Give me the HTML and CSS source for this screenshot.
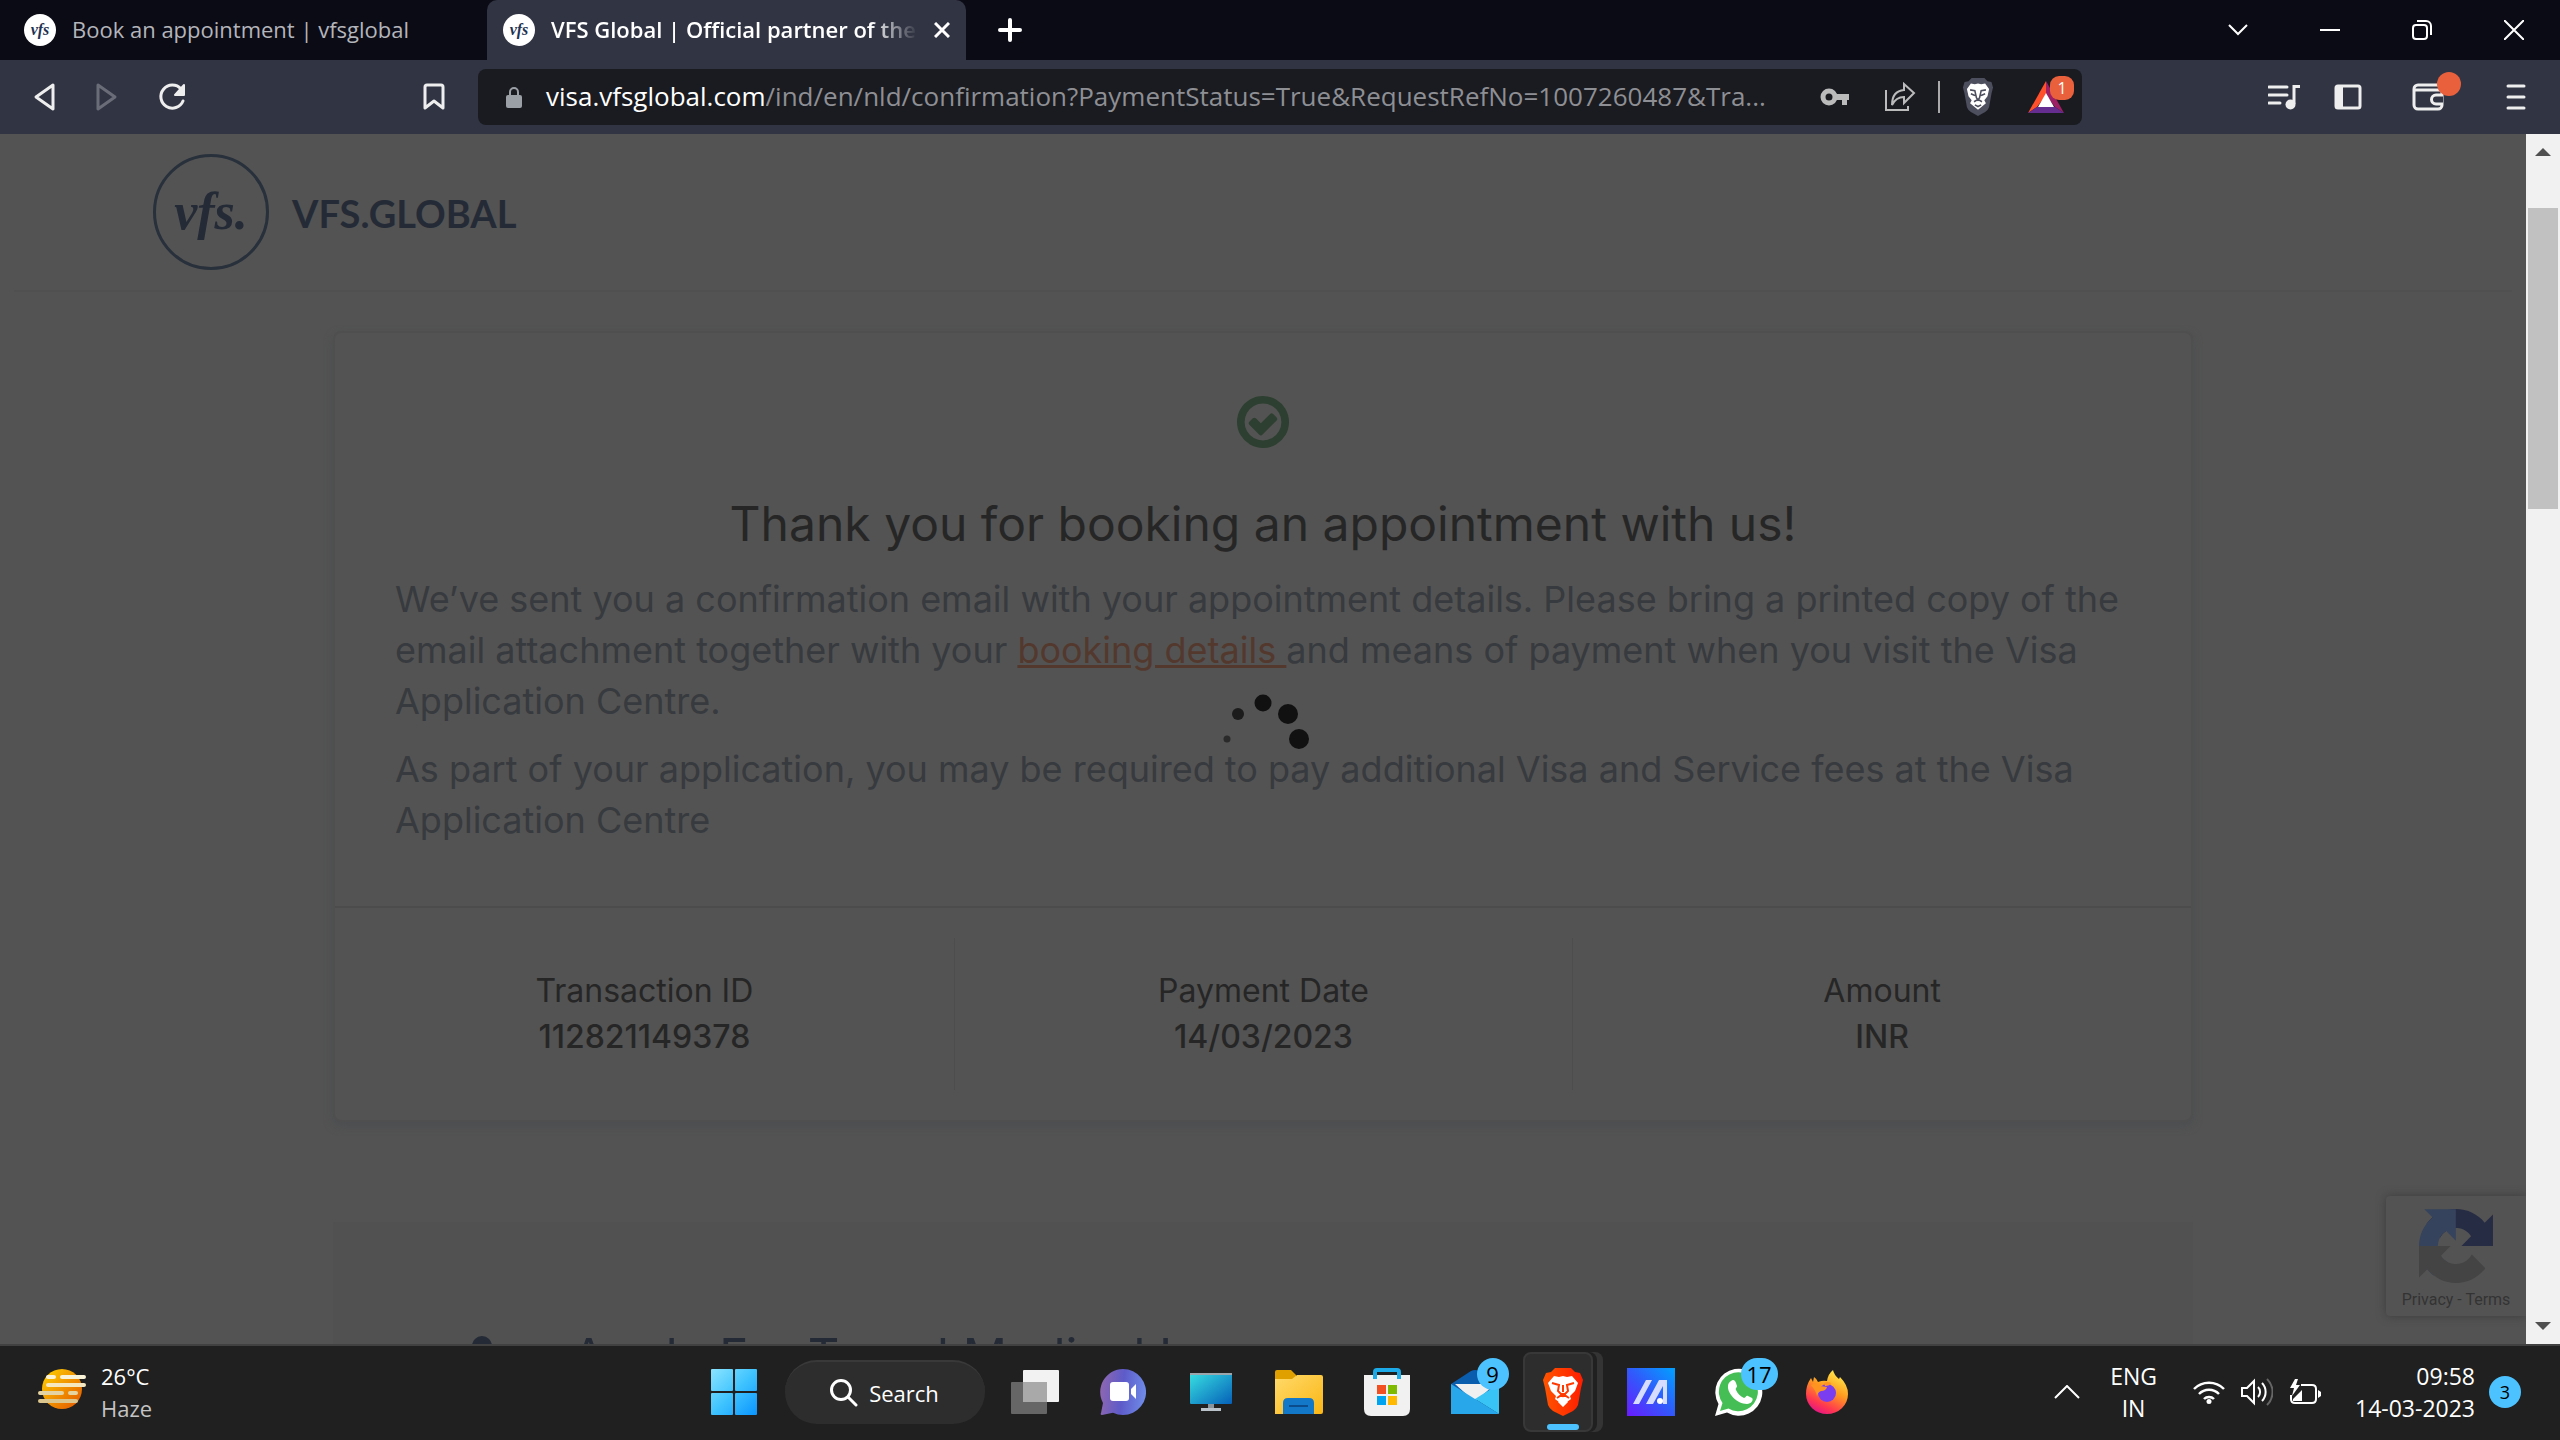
FILE: index.html
```html
<!DOCTYPE html>
<html lang="en">
<head>
<meta charset="utf-8">
<title>VFS Global | Official partner of the Netherlands</title>
<link rel="stylesheet" href="styles.css">
</head>
<body>
<div class="desktop">
  <header class="tabstrip">
    <button class="tab" type="button"><span class="favicon">vfs</span><span class="tab-title">Book an appointment | vfsglobal</span></button>
    <div class="tab tab-active"><span class="favicon">vfs</span><span class="tab-title">VFS Global | Official partner of the Netherlands</span>
      <button class="tab-close" type="button" aria-label="Close tab"><svg width="16" height="16" viewBox="0 0 16 16"><path d="M1 1l14 14M15 1L1 15" stroke="#fff" stroke-width="3"/></svg></button>
    </div>
    <button class="new-tab" type="button" aria-label="New tab"><svg width="24" height="24" viewBox="0 0 24 24"><path d="M12 2v20M2 12h20" stroke="#fff" stroke-width="4" stroke-linecap="round"/></svg></button>
    <div class="window-buttons">
      <button type="button" aria-label="Search tabs"><svg width="20" height="20" viewBox="0 0 20 20"><path d="M1 5l9 9 9-9" fill="none" stroke="#fff" stroke-width="2"/></svg></button>
      <button type="button" aria-label="Minimize"><svg width="20" height="20" viewBox="0 0 20 20"><path d="M0 10h20" stroke="#fff" stroke-width="2"/></svg></button>
      <button type="button" aria-label="Restore"><svg width="22" height="22" viewBox="0 0 22 22" fill="none" stroke="#fff" stroke-width="2"><rect x="2" y="6" width="14" height="14" rx="3"/><path d="M6 2h9a5 5 0 0 1 5 5v9"/></svg></button>
      <button type="button" aria-label="Close"><svg width="20" height="20" viewBox="0 0 20 20"><path d="M0 0l20 20M20 0L0 20" stroke="#fff" stroke-width="2"/></svg></button>
    </div>
  </header>

  <nav class="toolbar">
    <div class="nav-buttons">
      <button type="button" aria-label="Back"><svg width="24" height="30" viewBox="0 0 24 30"><path d="M21 3L4 15l17 12z" fill="none" stroke="#eee" stroke-width="3" stroke-linejoin="round"/></svg></button>
      <button type="button" aria-label="Forward"><svg width="24" height="30" viewBox="0 0 24 30"><path d="M3 3l17 12L3 27z" fill="none" stroke="#6a6d78" stroke-width="3" stroke-linejoin="round"/></svg></button>
      <button type="button" aria-label="Reload"><svg width="28" height="30" viewBox="1 0 28 30"><path d="M26 19a11.500 11.500 0 1 1-2-12" fill="none" stroke="#eee" stroke-width="3" stroke-linecap="round"/><path d="M27 3v10h-9z" fill="#eee" stroke="#eee" stroke-width="2" stroke-linejoin="round"/></svg></button>
      <button class="bookmark" type="button" aria-label="Bookmark"><svg width="22" height="28" viewBox="0 0 22 28"><path d="M2 4q0-2 2-2h14q2 0 2 2v21l-9-7-9 7z" fill="none" stroke="#eee" stroke-width="3" stroke-linejoin="round"/></svg></button>
    </div>
    <div class="address">
      <svg width="16" height="22" viewBox="0 0 16 22"><rect y="9" width="16" height="13" rx="2" fill="#9aa0a6"/><path d="M4 10V6a4 4 0 0 1 8 0v4" fill="none" stroke="#9aa0a6" stroke-width="2"/></svg>
      <label class="host" for="url">visa.vfsglobal.com</label>
      <input class="url" id="url" type="text" value="/ind/en/nld/confirmation?PaymentStatus=True&amp;RequestRefNo=1007260487&amp;Tra...">
      <div class="address-actions">
        <button type="button" aria-label="Saved password"><svg width="30" height="20" viewBox="0 0 30 20"><circle cx="9" cy="10" r="6" fill="none" stroke="#bbb" stroke-width="5"/><path d="M16 7h13v6h-2v5h-5v-5h-6z" fill="#bbb"/></svg></button>
        <button type="button" aria-label="Share"><svg width="32" height="30" viewBox="0 0 32 30" fill="none" stroke="#bbb" stroke-width="2"><path d="M2 8v20h22v-4"/><path d="M8 23Q8 9 20 8V2l10 9-10 10v-6Q12 15 8 23z"/></svg></button>
        <span class="divider"></span>
        <button type="button" aria-label="Brave Shields"><svg width="32" height="38" viewBox="0 0 40 48"><path d="M12 0h16l4 4 5 1 2 7-2 8-3 17q-1 3-5 6l-9 5-9-5q-4-3-5-6L3 20 1 12l2-7 5-1z" fill="#4d4e5e"/><path d="M20 7l4 1 5-1 5 7-2 9-4 5 2 4-10 8-10-8 2-4-4-5-2-9 5-7 5 1z" fill="#fff"/><path d="M10 15l6 1 2 9 2 3 2-3 2-9 6-1M15 30l5-3 5 3M16 34l4 2 4-2M11 20l5 2M29 20l-5 2" fill="none" stroke="#4d4e5e" stroke-width="2"/></svg></button>
        <button class="badged" type="button" aria-label="Brave Rewards"><svg width="36" height="32" viewBox="0 0 36 32"><path d="M18 0v14L9 26 0 32z" fill="#ff4f2b"/><path d="M18 0l18 32-9-6-9-12z" fill="#9e1f63"/><path d="M0 32l9-6h18l9 6z" fill="#662d91"/><path d="M18 12l8 14H10z" fill="#fff"/></svg><span class="reward-badge">1</span></button>
      </div>
    </div>
    <div class="tools">
      <button type="button" aria-label="Media"><svg width="34" height="28" viewBox="0 0 34 28"><path d="M1 4h18M1 12h18M1 20h11" stroke="#eee" stroke-width="3" stroke-linecap="round"/><path d="M26 21V3.500h6" fill="none" stroke="#eee" stroke-width="3"/><circle cx="22.500" cy="21.500" r="5" fill="#eee"/></svg></button>
      <button type="button" aria-label="Sidebar"><svg width="28" height="26" viewBox="0 0 28 26"><rect x="2" y="2" width="24" height="22" rx="2" fill="none" stroke="#eee" stroke-width="3"/><path d="M2 2h7v22H2z" fill="#eee"/></svg></button>
      <button class="badged" type="button" aria-label="Wallet"><svg width="34" height="28" viewBox="0 0 34 28" fill="none" stroke="#eee" stroke-width="3"><rect x="2" y="2" width="28" height="24" rx="4"/><path d="M3 7h26"/><path d="M31 12h-7a4.500 4.500 0 0 0 0 9h7" fill="#313443"/></svg><span class="wallet-dot"></span></button>
      <button type="button" aria-label="Menu"><svg width="20" height="28" viewBox="0 0 20 28"><path d="M2 3h16M2 14h16M2 25h16" stroke="#eee" stroke-width="3" stroke-linecap="round"/></svg></button>
    </div>
  </nav>

  <div class="browser-body">
    <div class="viewport">
      <header class="site-header">
        <a class="brand" href="#"><span class="brand-mark">vfs.</span><span class="brand-name">VFS.GLOBAL</span></a>
      </header>
      <main class="container">
        <section class="card">
          <div class="message">
            <svg class="check" width="52" height="52" viewBox="0 0 1536 1536"><path fill="#2d3f30" fill-rule="evenodd" d="M1171 723l-422 422q-19 19-45 19t-45-19L365 851q-19-19-19-45t19-45l102-102q19-19 45-19t45 19l147 147 275-275q19-19 45-19t45 19l102 102q19 19 19 45t-19 45zm141 45q0-148-73-273T1041 297 768 224t-273 73-198 198-73 273 73 273 198 198 273 73 273-73 198-198 73-273zm224 0q0 209-103 385.500T1153.500 1433 768 1536t-385.500-103T103 1153.500 0 768t103-385.500T382.500 103 768 0t385.500 103T1433 382.500 1536 768z"/></svg>
            <h1>Thank you for booking an appointment with us!</h1>
            <p>We’ve sent you a confirmation email with your appointment details. Please bring a printed copy of the email attachment together with your <a href="#">booking details </a>and means of payment when you visit the Visa Application Centre.</p>
            <p>As part of your application, you may be required to pay additional Visa and Service fees at the Visa Application Centre</p>
          </div>
          <dl class="facts">
            <div><dt>Transaction ID</dt><dd>112821149378</dd></div>
            <div><dt>Payment Date</dt><dd>14/03/2023</dd></div>
            <div><dt>Amount</dt><dd>INR</dd></div>
          </dl>
        </section>
        <section class="promo">
          <svg width="64" height="64" viewBox="0 0 64 64"><circle cx="32" cy="18" r="10" fill="#242b36"/><path d="M12 62q0-30 20-30t20 30z" fill="#242b36"/></svg>
          <h2>Apply For Travel Medical Insurance</h2>
          <button class="promo-button" type="button">Apply Now</button>
        </section>
      </main>
      <aside class="recaptcha">
        <svg width="74" height="74" viewBox="0 0 64 64"><path fill="#272c45" d="M64 31.955l-.033-1.370V4.687l-7.160 7.160C50.948 4.674 42.033.093 32.050.093c-10.400 0-19.622 4.960-25.458 12.640l11.736 11.860a15.550 15.550 0 0 1 4.754-5.334c2.050-1.600 4.952-2.906 8.968-2.906.485 0 .860.057 1.135.163 4.976.393 9.288 3.140 11.828 7.124l-8.307 8.307L64 31.953"/><path fill="#36435c" d="M31.862.094l-1.370.033H4.594l7.160 7.160C4.580 13.147 0 22.060 0 32.046c0 10.400 4.960 19.622 12.640 25.458L24.500 45.768a15.550 15.550 0 0 1-5.334-4.754c-1.600-2.050-2.906-4.952-2.906-8.968 0-.485.057-.860.163-1.135.393-4.976 3.140-9.288 7.124-11.828l8.307 8.307L31.860.095"/><path fill="#444" d="M.001 32.045l.033 1.370v25.898l7.160-7.160c5.860 7.173 14.774 11.754 24.760 11.754 10.400 0 19.622-4.960 25.458-12.640l-11.736-11.860a15.550 15.550 0 0 1-4.754 5.334c-2.050 1.600-4.952 2.906-8.968 2.906-.485 0-.860-.057-1.135-.163-4.976-.393-9.288-3.140-11.828-7.124l8.307-8.307c-10.522.040-22.400.066-27.295-.005"/></svg>
        <div class="recaptcha-links"><a href="#">Privacy</a> - <a href="#">Terms</a></div>
      </aside>
      <div class="loading">
        <svg width="100" height="100" viewBox="-50 -50 100 100"><g fill="#111"><circle cx="0" cy="-36" r="8.500"/><circle cx="25" cy="-25" r="10"/><circle cx="36" cy="0" r="10"/><circle cx="-25" cy="-25" r="6" fill="#1c1c1c"/><circle cx="-36" cy="0" r="3.500" fill="#2a2a2a"/></g></svg>
      </div>
    </div>
    <div class="scrollbar">
      <svg width="16" height="8" viewBox="0 0 16 8"><path d="M8 0l8 8H0z" fill="#505050"/></svg>
      <div class="scroll-track"><div class="scroll-thumb"></div></div>
      <svg width="16" height="8" viewBox="0 0 16 8"><path d="M8 8l8-8H0z" fill="#505050"/></svg>
    </div>
  </div>

  <footer class="taskbar">
    <button class="weather" type="button">
      <svg width="48" height="44" viewBox="0 0 48 44"><defs><linearGradient id="sun" x1="0" y1="0" x2="1" y2="1"><stop offset="0" stop-color="#ffd400"/><stop offset="1" stop-color="#e25200"/></linearGradient></defs><circle cx="24" cy="22" r="20" fill="url(#sun)"/><g stroke-width="4" stroke-linecap="round"><path d="M10 10h6M24 10h22" stroke="#fbf3d8"/><path d="M10 18h36" stroke="#f5e7bf"/><path d="M2 26h22M32 26h6" stroke="#e5d4a2"/><path d="M2 34h36" stroke="#dcc68e"/></g></svg>
      <span class="weather-text"><span>26°C</span><span class="muted">Haze</span></span>
    </button>
    <div class="apps">
      <button class="app" type="button" aria-label="Start"><svg width="46" height="46" viewBox="0 0 46 46"><defs><linearGradient id="win" gradientUnits="userSpaceOnUse" x1="0" y1="0" x2="46" y2="46"><stop offset="0" stop-color="#8be4ff"/><stop offset=".5" stop-color="#40c4ff"/><stop offset="1" stop-color="#0a95ff"/></linearGradient></defs><g fill="url(#win)"><rect width="22" height="22" rx="1"/><rect x="24" width="22" height="22" rx="1"/><rect y="24" width="22" height="22" rx="1"/><rect x="24" y="24" width="22" height="22" rx="1"/></g></svg></button>
      <button class="search" type="button"><svg width="28" height="28" viewBox="0 0 28 28"><circle cx="11" cy="11" r="9.500" fill="none" stroke="#fff" stroke-width="3"/><path d="M18 18l8 8" stroke="#fff" stroke-width="3" stroke-linecap="round"/></svg>Search</button>
      <button class="app" type="button" aria-label="Task view"><svg width="48" height="44" viewBox="0 0 48 44"><rect x="12" width="36" height="32" rx="1" fill="#f2f2f2"/><rect y="12" width="36" height="32" rx="1" fill="#7d7d7d" fill-opacity=".75"/><path d="M12 12h24v20H12z" fill="#a9a9a9"/></svg></button>
      <button class="app" type="button" aria-label="Chat"><svg width="46" height="46" viewBox="0 0 46 46"><defs><linearGradient id="chat" x1="0" y1=".3" x2="1" y2=".4"><stop offset="0" stop-color="#8f67b0"/><stop offset=".5" stop-color="#5d5bc9"/><stop offset="1" stop-color="#6f8be8"/></linearGradient></defs><path d="M23 0a23 23 0 1 1-10 43.700L2 46q-2 0-1-2l2-10A23 23 0 0 1 23 0z" fill="url(#chat)"/><rect x="10" y="13" width="19" height="19" rx="3" fill="#fff"/><path d="M31 20l5-5v15l-5-5z" fill="#fff"/></svg></button>
      <button class="app" type="button" aria-label="This PC"><svg width="42" height="38" viewBox="0 0 42 38"><defs><linearGradient id="pc" x1="0" y1="0" x2="1" y2="1"><stop offset="0" stop-color="#38e0e2"/><stop offset="1" stop-color="#0560b8"/></linearGradient></defs><rect width="42" height="31" rx="1" fill="url(#pc)"/><path d="M0 0h42v2H0z" fill="#9aa6ac"/><path d="M18 31h6v5h-6z" fill="#8a949b"/><path d="M11 35h20v3H11z" fill="#b8c2c8"/></svg></button>
      <button class="app" type="button" aria-label="File Explorer"><svg width="48" height="44" viewBox="0 0 48 44"><defs><linearGradient id="dir" x1="0" y1="0" x2="1" y2="1"><stop offset="0" stop-color="#ffda6b"/><stop offset="1" stop-color="#fbb614"/></linearGradient></defs><path d="M0 2q0-2 2-2h14l5 5v8H0z" fill="#dfa000"/><path d="M0 9h17l5-4h24q2 0 2 2v35q0 2-2 2H0z" fill="url(#dir)"/><path d="M8 44V33q0-5 5-5h21q5 0 5 5v11z" fill="#1478c8"/><path d="M14 36h19" stroke="#0a4c8c" stroke-width="2"/></svg></button>
      <button class="app" type="button" aria-label="Microsoft Store"><svg width="46" height="48" viewBox="0 0 46 48"><path d="M0 7h46v34q0 7-7 7H7q-7 0-7-7z" fill="#f1f1f1"/><path d="M11 11V4q0-2 2-2h20q2 0 2 2v7" fill="none" stroke="#1cabe8" stroke-width="4"/><path d="M13 17h9v9h-9z" fill="#f25022"/><path d="M24 17h9v9h-9z" fill="#7fba00"/><path d="M13 28h9v9h-9z" fill="#00a4ef"/><path d="M24 28h9v9h-9z" fill="#ffb900"/></svg></button>
      <button class="app badged" type="button" aria-label="Mail"><svg width="48" height="44" viewBox="0 0 48 44"><path d="M0 14L20 1q4-2 8 0l20 13v10H0z" fill="#0a5cad"/><path d="M4 14h40L24 32z" fill="#f0f0f0"/><path d="M48 14v30L24 29z" fill="#38c4f4"/><path d="M0 44l24-15 24 15z" fill="#1a8fdc"/><path d="M0 14l48 30H0z" fill="#28a8ea"/></svg><span class="count">9</span></button>
      <button class="app app-active" type="button" aria-label="Brave"><svg width="40" height="48" viewBox="0 0 40 48"><defs><linearGradient id="brave"><stop offset="0" stop-color="#ff5500"/><stop offset="1" stop-color="#ff1d00"/></linearGradient></defs><path d="M12 0h16l4 4 5 1 3 7-2 8-3 17q-1 3-5 6l-10 5-10-5q-4-3-5-6L2 20 0 12l3-7 5-1z" fill="url(#brave)"/><path d="M20 8l4 1 5-1 6 7-3 8-5 5 1 3-8 6-8-6 1-3-5-5-3-8 6-7 5 1zM20 31l5 3-5 5-5-5z" fill="#fff"/><path d="M9 15l7 2-1 6 5 5 5-5-1-6 7-2M20 17v7M14 30l6-4 6 4" fill="none" stroke="#ff3a00" stroke-width="2"/></svg></button>
      <button class="app" type="button" aria-label="Armoury Crate"><svg width="48" height="48" viewBox="0 0 48 48"><defs><linearGradient id="arm" x1="0" y1="1" x2="1" y2="0"><stop offset="0" stop-color="#6a1bff"/><stop offset=".5" stop-color="#3159fb"/><stop offset="1" stop-color="#00a2ff"/></linearGradient></defs><path d="M0 0h48v48H0z" fill="url(#arm)"/><path d="M6 36l13-24h6L12 36zM19 36l13-24h8v24h-4V18l-10 18z" fill="#d6dcff"/><circle cx="33" cy="33" r="3" fill="#fff"/></svg></button>
      <button class="app badged" type="button" aria-label="WhatsApp"><svg width="48" height="48" viewBox="0 0 48 48"><path d="M0 48l3.500-12A23.500 23.500 0 1 1 12 44.500z" fill="#fff"/><path d="M5 43l2.500-8a19.500 19.500 0 1 1 6 5.500z" fill="#45bf55"/><path d="M16 13c2-2 4-1 5 2l1 3c0 2-2 2-1 4 2 4 4 6 8 8 2 0 2-3 4-2l4 2c2 2-1 6-5 6-10 0-20-11-19-18 0-2 1-4 3-5z" fill="#fff"/></svg><span class="count">17</span></button>
      <button class="app" type="button" aria-label="Firefox"><svg width="42" height="44" viewBox="0 0 42 44"><defs><linearGradient id="fox" x1=".8" y1="0" x2=".3" y2="1"><stop offset="0" stop-color="#fff44f"/><stop offset=".45" stop-color="#ff9a1f"/><stop offset=".8" stop-color="#ff3750"/><stop offset="1" stop-color="#e31587"/></linearGradient></defs><path d="M27 0q1 5 6 9l1-2q8 8 8 17a21 20 0 0 1-42 0q0-9 5-16l2 4 1-5q3 2 4 5 5-2 9-1 1-7 6-11z" fill="url(#fox)"/><circle cx="21" cy="23" r="9" fill="#7a3df0"/><path d="M5 15q6-3 9 1l7 1q-1 4-6 4-3 1-4 5-1-5-6-11zM18 13q4-2 7 0-1 3-6 3z" fill="#ff9520"/></svg></button>
    </div>
    <div class="tray">
      <button type="button" aria-label="Hidden icons"><svg width="26" height="14" viewBox="0 0 26 14"><path d="M1 13L13 1l12 12" fill="none" stroke="#fff" stroke-width="2"/></svg></button>
      <button class="lang" type="button"><span>ENG</span><span>IN</span></button>
      <button class="status" type="button" aria-label="Network, volume and battery">
        <svg width="32" height="26" viewBox="0 0 32 26" fill="none" stroke="#fff" stroke-width="2.500"><path d="M1 10a21 21 0 0 1 30 0M6 15a14 14 0 0 1 20 0M11 20a7 7 0 0 1 10 0"/><circle cx="16" cy="22.500" r="2.500" fill="#fff" stroke="none"/></svg>
        <svg width="32" height="28" viewBox="0 0 32 28" fill="none" stroke="#fff" stroke-width="2"><path d="M1 10h5l7-7v22l-7-7H1z"/><path d="M17 9a7 7 0 0 1 0 10M21 5a13 13 0 0 1 0 18"/><path d="M26 1a18 18 0 0 1 0 26" stroke="#666"/></svg>
        <svg width="32" height="26" viewBox="0 0 32 26"><path d="M12 6h11q4 0 4 4v10q0 4-4 4H6q-4 0-4-4v-4" fill="none" stroke="#fff" stroke-width="2"/><path d="M29 11l3 2v4l-3 2zM4 20l9-9v11H4zM6 0L1 9h4l-2 8 8-11H7l2-6z" fill="#fff"/></svg>
      </button>
      <button class="clock" type="button"><span>09:58</span><span>14-03-2023</span></button>
      <span class="notice">3</span>
    </div>
  </footer>
</div>
</body>
</html>
```
FILE: styles.css
```css
* { box-sizing: border-box; }
body { margin: 0; background: #535353; font-family: "Open Sans", "Noto Sans", sans-serif; }
button { padding: 0; border: 0; background: none; color: inherit; font: inherit; display: flex; align-items: center; justify-content: center; }
svg { display: block; flex: none; }
h1, h2, p, dl, dd { margin: 0; }

.desktop { height: 100vh; display: flex; flex-direction: column; overflow: hidden; }

/* Tab strip */
.tabstrip { height: 60px; flex: none; display: flex; background: #0b0b15; color: #b4b5bb; font-size: 22px; }
.tab { width: 487px; padding: 0 24px; display: flex; align-items: center; justify-content: flex-start; gap: 16px; }
.tab-active { width: 479px; padding: 0 16px; background: #313443; color: #fff; border-radius: 10px 10px 0 0; font-weight: 600; }
.tab-title { padding-bottom: 2px; white-space: nowrap; overflow: hidden; }
.tab-active .tab-title { flex: 1; mask-image: linear-gradient(to right, #000 calc(100% - 48px), transparent); }
.favicon { width: 32px; height: 32px; flex: none; display: grid; place-items: center; border-radius: 50%; background: #fff; color: #1f3354; font: italic bold 16px/1 "Liberation Serif", serif; }
.new-tab { width: 88px; }
.window-buttons { margin-left: auto; display: flex; }
.window-buttons button { width: 92px; }

/* Toolbar */
.toolbar { height: 74px; flex: none; display: flex; align-items: center; background: #313443; }
.nav-buttons { width: 478px; padding: 0 33px 0 32px; display: flex; align-items: center; gap: 39px; }
.bookmark { margin-left: auto; }
.address { flex: 1; height: 56px; padding: 0 8px 0 28px; display: flex; align-items: center; border-radius: 8px; background: #1a1b20; font-size: 26px; }
.host { margin-left: 24px; padding-bottom: 2px; color: #fff; }
.url { flex: 1; min-width: 0; padding: 0 0 2px; border: 0; outline: 0; background: none; color: #8e8f94; font: inherit; }
.address-actions { display: flex; align-items: center; margin-left: 24px; }
.address-actions button { margin-right: 34px; }
.address-actions button:last-child { margin: 0 10px 0 0; }
.divider { width: 2px; height: 32px; margin: 0 22px 0 -12px; background: #aaa; }
.badged { position: relative; }
.reward-badge, .wallet-dot { position: absolute; width: 24px; height: 24px; border-radius: 9px; background: #e8603c; color: #fff; font-size: 16px; line-height: 24px; }
.reward-badge { top: -5px; right: -10px; }
.wallet-dot { top: -11px; right: -15px; border-radius: 50%; }
.tools { width: 478px; padding-right: 34px; display: flex; justify-content: flex-end; align-items: center; }
.tools button { margin-left: 32px; }
.tools .badged { margin: 0 28px 0 50px; }

/* Page */
.browser-body { flex: 1; min-height: 0; display: flex; }
.viewport { flex: 1; position: relative; overflow: hidden; background: #535353; font-family: Inter, sans-serif; color: #262626; }
.site-header { height: 158px; margin: 0 14px; padding: 20px 139px; border-bottom: 2px solid #505050; }
.brand { display: inline-flex; align-items: center; gap: 23px; color: #242b36; text-decoration: none; }
.brand-mark { width: 116px; height: 116px; display: grid; place-items: center; border: 3px solid #28303b; border-radius: 50%; font: italic bold 52px/1 "Liberation Serif", serif; }
.brand-name { padding-top: 2px; font: bold 38px/48px Lato, sans-serif; }
.container { max-width: 1860px; margin: 39px auto 0; }
.card { border: 2px solid #4f4f4f; border-radius: 8px; box-shadow: 0 4px 8px #4c4e51; background: #535353; }
.message { padding: 63px 60px 60px; border-bottom: 2px solid #4c4c4c; }
.check { margin: 0 auto 47px; }
.message h1 { margin-bottom: 21px; font-size: 48px; line-height: 58px; font-weight: 400; text-align: center; }
.message p { font-size: 36px; line-height: 51px; color: #373a3e; }
.message p + p { margin-top: 17px; }
.message a { color: #53382e; text-decoration: underline; }
.facts { display: grid; grid-template-columns: repeat(3, 1fr); padding: 30px 0; text-align: center; font-size: 32px; line-height: 46px; }
.facts div { padding: 30px 0; }
.facts div + div { border-left: 1px solid #4d4d4d; }
.facts dd { font-weight: 500; }
.promo { display: flex; align-items: flex-start; margin-top: 100px; padding: 106px 106px 60px 117px; background: #515151; color: #242b36; }
.promo svg { margin: 0 58px 0 0; }
.promo h2 { flex: 1; font-size: 49px; line-height: 58px; font-weight: 400; }
.promo-button { width: 344px; height: 80px; margin-top: 16px; border-radius: 8px; background: #5e3a2d; font-size: 32px; }
.recaptcha { position: absolute; right: 0; bottom: 28px; width: 140px; padding: 13px 0 7px; display: flex; flex-direction: column; align-items: center; gap: 8px; border-radius: 4px 0 0 4px; background: #535353; box-shadow: 0 0 10px #3c3c3c; font: 16px/18px Roboto, sans-serif; color: #333; }
.recaptcha a { color: inherit; text-decoration: none; }
.loading { position: absolute; inset: 0; display: grid; place-items: center; }

.scrollbar { width: 34px; padding: 14px 2px; display: flex; flex-direction: column; align-items: center; background: #f1f1f1; }
.scroll-track { flex: 1; width: 100%; padding-top: 52px; }
.scroll-thumb { height: 27%; background: #c1c1c1; }

/* Taskbar */
.taskbar { height: 96px; flex: none; display: grid; grid-template-columns: 1fr auto 1fr; align-items: center; padding-bottom: 2px; border-top: 2px solid #414141; background: #202020; color: #fff; font-size: 22px; line-height: 32px; }
.weather { justify-self: start; padding-left: 38px; gap: 15px; text-align: left; }
.weather svg { margin-top: -6px; }
.weather-text, .lang, .clock { display: flex; flex-direction: column; }
.muted { color: #c4c4c4; }
.apps { display: flex; align-items: center; }
.app { width: 88px; height: 80px; }
.search { width: 200px; height: 64px; margin: 0 6px 0 7px; gap: 11px; border-top: 2px solid #393939; border-radius: 32px; background: #2d2d2d; }
.count { position: absolute; left: 46px; top: 6px; min-width: 32px; height: 32px; padding: 0 6px; border-radius: 16px; background: #4cc2ff; color: #000; text-align: center; }
.app-active { position: relative; width: 70px; margin: 0 14px 0 4px; padding-left: 10px; border: 2px solid #383838; border-radius: 8px; background: #2d2d2d; box-shadow: 4px 0 0 #202020, 10px 0 0 #343434; }
.app-active::after { content: ""; position: absolute; left: 22px; bottom: 0; width: 32px; height: 6px; border-radius: 3px; background: #4cc2ff; }
.tray { justify-self: end; display: flex; align-items: center; padding-right: 39px; font-size: 23px; }
.lang { margin: 0 36px 0 30px; }
.status { gap: 16px; }
.clock { align-items: flex-end; margin: 0 14px 0 34px; }
.notice { width: 32px; height: 32px; border-radius: 50%; background: #4cc2ff; color: #000; text-align: center; font-size: 18px; }
```
